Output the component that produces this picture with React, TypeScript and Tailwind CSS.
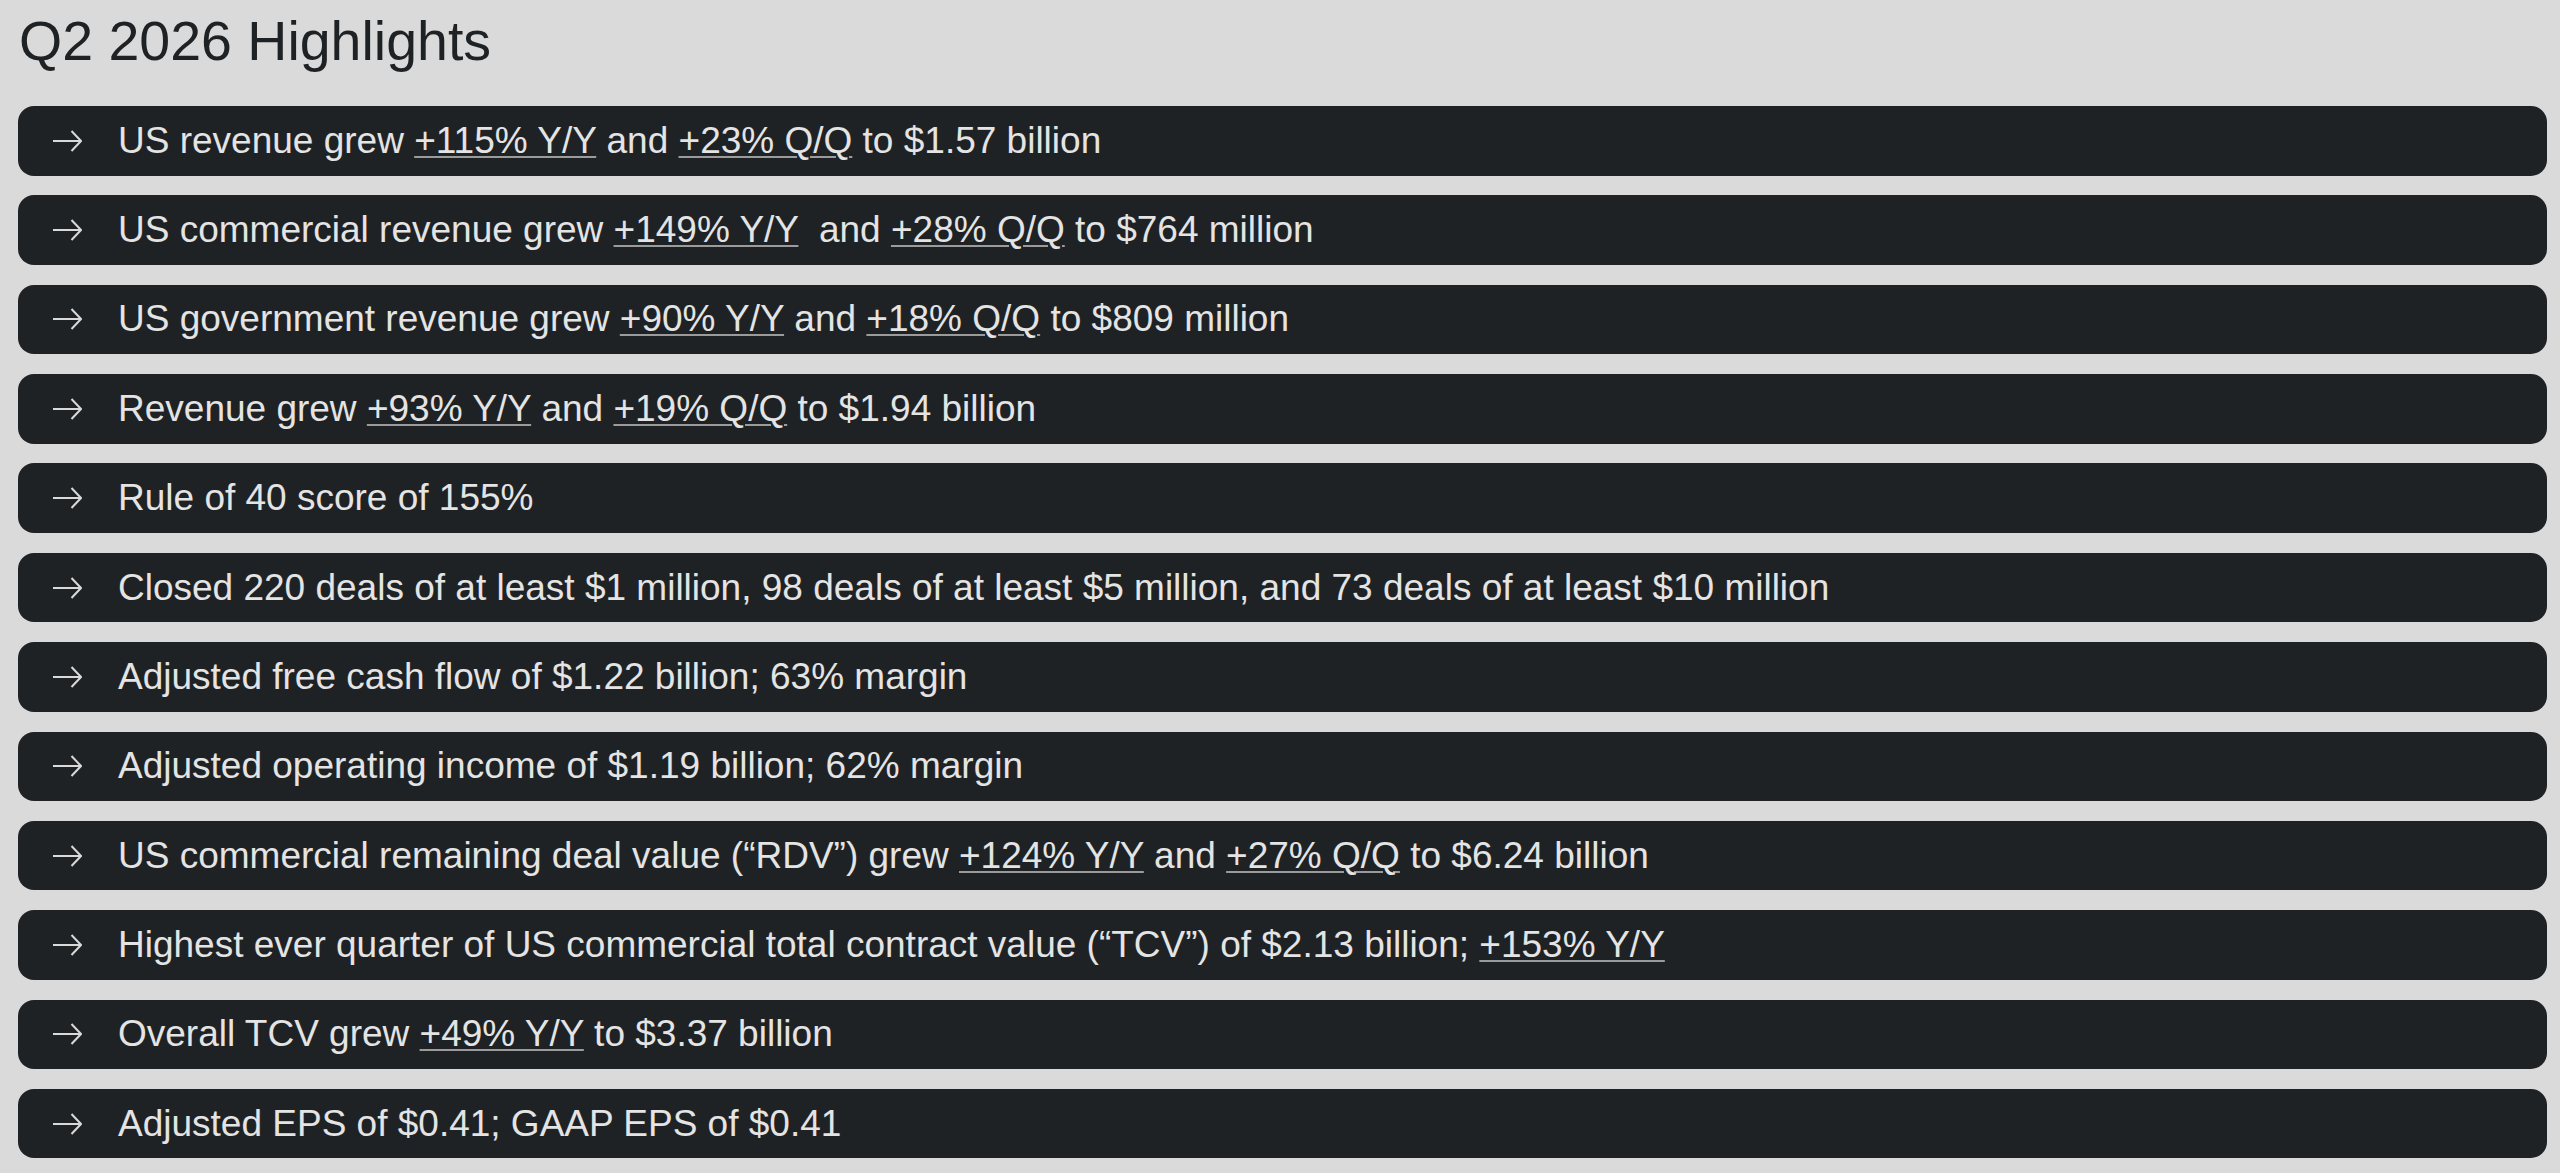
const highlights: string[] = [
  "US revenue grew _+115% Y/Y_ and _+23% Q/Q_ to $1.57 billion",
  "US commercial revenue grew _+149% Y/Y_  and _+28% Q/Q_ to $764 million",
  "US government revenue grew _+90% Y/Y_ and _+18% Q/Q_ to $809 million",
  "Revenue grew _+93% Y/Y_ and _+19% Q/Q_ to $1.94 billion",
  "Rule of 40 score of 155%",
  "Closed 220 deals of at least $1 million, 98 deals of at least $5 million, and 73 deals of at least $10 million",
  "Adjusted free cash flow of $1.22 billion; 63% margin",
  "Adjusted operating income of $1.19 billion; 62% margin",
  "US commercial remaining deal value (\u201cRDV\u201d) grew _+124% Y/Y_ and _+27% Q/Q_ to $6.24 billion",
  "Highest ever quarter of US commercial total contract value (\u201cTCV\u201d) of $2.13 billion; _+153% Y/Y_",
  "Overall TCV grew _+49% Y/Y_ to $3.37 billion",
  "Adjusted EPS of $0.41; GAAP EPS of $0.41",
];

function Arrow() {
  return (
    <svg width="30" height="22" viewBox="0 0 30 22" fill="none" className="shrink-0">
      <path d="M1 11H29" stroke="#d9d9d9" strokeWidth="2" />
      <path d="M19.5 1L29 11L19.5 21" stroke="#d9d9d9" strokeWidth="2" />
    </svg>
  );
}

function HighlightText({ text }: { text: string }) {
  const parts = text.split("_");
  return (
    <span className="whitespace-pre">
      {parts.map((part, i) =>
        i % 2 === 1 ? (
          <span
            key={i}
            className="underline decoration-[#9b9b9b] decoration-[1.5px] underline-offset-[3px]"
          >
            {part}
          </span>
        ) : (
          <span key={i}>{part}</span>
        )
      )}
    </span>
  );
}

export default function App() {
  return (
    <div className="min-h-screen bg-[#dadada] pl-[18px] pr-[13px] pt-[14px] font-['Liberation_Sans',Arial,sans-serif]">
      <h1 className="text-[55.5px] leading-[55px] text-[#1f2225] pl-[1px]">Q2 2026 Highlights</h1>

      <div className="mt-[37px] flex flex-col gap-[19.86px]">
        {highlights.map((item, i) => (
          <div
            key={i}
            className="h-[69.5px] rounded-[16px] bg-[#1f2225] flex items-center pl-[34px]"
          >
            <Arrow />
            <div className="ml-[36px] pb-[1px] text-[37px] leading-none text-[#e4e4e4]">
              <HighlightText text={item} />
            </div>
          </div>
        ))}
      </div>
    </div>
  );
}
